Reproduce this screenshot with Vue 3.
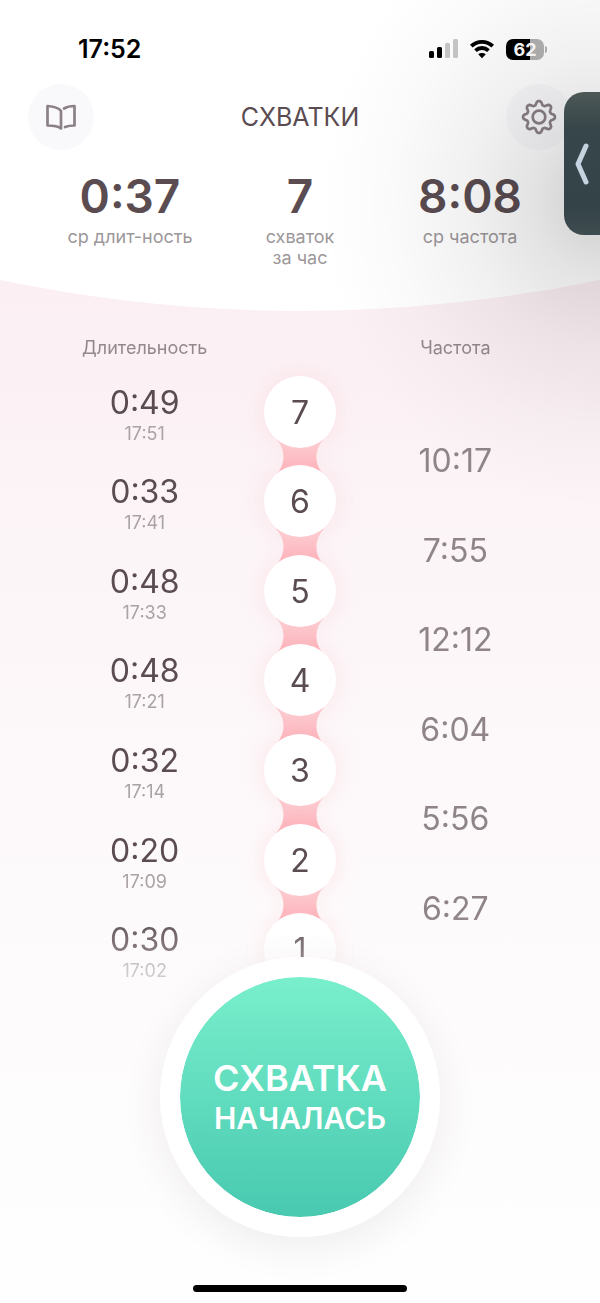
<script setup>
import { ref } from 'vue';

const stats = [
  { value: '0:37', label: 'ср длит-ность' },
  { value: '7', label: 'схваток за час' },
  { value: '8:08', label: 'ср частота' },
];

const contractions = ref([
  { id: 7, duration: '0:49', time: '17:51' },
  { id: 6, duration: '0:33', time: '17:41' },
  { id: 5, duration: '0:48', time: '17:33' },
  { id: 4, duration: '0:48', time: '17:21' },
  { id: 3, duration: '0:32', time: '17:14' },
  { id: 2, duration: '0:20', time: '17:09' },
  { id: 1, duration: '0:30', time: '17:02' },
]);

const intervals = ref(['10:17', '7:55', '12:12', '6:04', '5:56', '6:27']);

// eight rounded teeth around the centre of a 36x36 box
function gearPath() {
  const points = [];
  for (let i = 0; i < 160; i++) {
    const a = (i / 160) * Math.PI * 2;
    const s = Math.cos(8 * a);
    const r = 14 + 1.9 * s * (1.35 - 0.35 * s * s);
    points.push(`${(18 + r * Math.cos(a)).toFixed(2)} ${(18 + r * Math.sin(a)).toFixed(2)}`);
  }
  return `M${points.join('L')}Z`;
}

const gear = gearPath();
</script>

<template>
  <div class="page">
    <header class="header">
      <div class="status">
        <span class="clock">17:52</span>
        <div class="indicators">
          <svg class="signal" viewBox="0 0 29 20" aria-hidden="true">
            <rect x="0" y="12" width="5" height="7" rx="1.5" />
            <rect x="8" y="8" width="5" height="11" rx="1.5" />
            <rect class="off" x="16" y="4" width="5" height="15" rx="1.5" />
            <rect class="off" x="24" y="0" width="5" height="19" rx="1.5" />
          </svg>
          <svg class="wifi" viewBox="0 0 26 20" aria-hidden="true">
            <path d="M2.3 7.2C8.2 1.4 17.8 1.4 23.7 7.2" />
            <path d="M6.5 11.6C10.2 8.1 15.8 8.1 19.5 11.6" />
            <path class="dot" d="M13 19.2L9.2 15.3C11.3 13.4 14.7 13.4 16.8 15.3Z" />
          </svg>
          <div class="battery">
            <span class="level">62</span>
            <span class="tip"></span>
          </div>
        </div>
      </div>

      <nav class="nav">
        <button class="round" aria-label="Журнал">
          <svg class="book" viewBox="0 0 36 36" aria-hidden="true">
            <path d="M18 29.5V12C16 9 10.5 7.5 4.5 7V26.5C11 26.5 15.5 27.5 18 29.5" />
            <path d="M21 9.5C23.5 8 27 7 31.5 7V26.5C27.5 26.5 24.5 27 22 28" />
          </svg>
        </button>
        <h1>СХВАТКИ</h1>
        <button class="round" aria-label="Настройки">
          <svg class="gear" viewBox="0 0 36 36" aria-hidden="true">
            <path :d="gear" />
            <circle cx="18" cy="18" r="6.3" />
          </svg>
        </button>
      </nav>

      <dl class="stats">
        <div v-for="stat in stats" :key="stat.label" class="stat">
          <dd>{{ stat.value }}</dd>
          <dt>{{ stat.label }}</dt>
        </div>
      </dl>
    </header>
    <svg class="curve" viewBox="0 0 600 31" preserveAspectRatio="none" aria-hidden="true">
      <path d="M0 0Q300 62 600 0Z" />
    </svg>

    <main>
      <div class="log">
        <section class="column">
          <h2>Длительность</h2>
          <ol class="rows">
            <li v-for="item in contractions" :key="item.id" class="entry">
              <span class="duration">{{ item.duration }}</span>
              <span class="time">{{ item.time }}</span>
            </li>
          </ol>
        </section>

        <section class="column chain">
          <ol class="rows">
            <li v-for="(item, index) in contractions" :key="item.id" class="node">
              <svg v-if="index < contractions.length - 1" class="link" viewBox="0 0 48 36" aria-hidden="true">
                <defs>
                  <linearGradient :id="'link' + item.id" x1="0" y1="0" x2="0" y2="1">
                    <stop offset="0.2" stop-color="#fdcbd0" />
                    <stop offset="0.8" stop-color="#fdb5bd" />
                  </linearGradient>
                </defs>
                <path :fill="`url(#link${item.id})`" d="M0 0C10 10 10 26 0 36H48C38 26 38 10 48 0Z" />
              </svg>
              <span class="bubble">{{ item.id }}</span>
            </li>
          </ol>
        </section>

        <section class="column">
          <h2>Частота</h2>
          <ol class="rows between">
            <li v-for="interval in intervals" :key="interval" class="interval">{{ interval }}</li>
          </ol>
        </section>
      </div>

      <button class="start">
        <span class="big">СХВАТКА</span>
        <span class="small">НАЧАЛАСЬ</span>
      </button>
    </main>

    <div class="home"></div>

    <div class="shade"></div>
    <button class="drawer" aria-label="Открыть панель">
      <svg viewBox="0 0 16 44" aria-hidden="true">
        <path d="M12 4L4 22L12 40" />
      </svg>
    </button>
  </div>
</template>

<style>
body {
  margin: 0;
}
</style>

<style scoped>
.page {
  position: relative;
  display: flex;
  flex-direction: column;
  min-height: 100vh;
  overflow: hidden;
  box-sizing: border-box;
  padding-bottom: 11px;
  font-family: Inter, "Liberation Sans", sans-serif;
  color: #5a4c51;
  background: linear-gradient(#fbeff3 280px, #fcf5f8 560px, #fdfafb 900px, #fefefe 1250px);
}

button {
  padding: 0;
  border: none;
  font-family: inherit;
  cursor: pointer;
}

h1,
h2,
dl,
dd,
ol {
  margin: 0;
  padding: 0;
}

ol {
  list-style: none;
}

.header {
  padding: 34px 0 12px;
  background: white;
}

.status {
  display: flex;
  justify-content: space-between;
  align-items: center;
  height: 30px;
  padding: 0 53px 0 78px;
}

.clock {
  font-size: 25px;
  font-weight: 600;
  color: black;
}

.indicators {
  display: flex;
  align-items: center;
  gap: 11px;
}

.signal {
  width: 29px;
  height: 20px;

  .off {
    fill: #c8c8c8;
  }
}

.wifi {
  width: 26px;
  height: 20px;
  fill: none;
  stroke: black;
  stroke-width: 3.8;

  .dot {
    fill: black;
    stroke: none;
  }
}

.battery {
  display: flex;
  align-items: center;
  gap: 1px;
}

.level {
  width: 38px;
  height: 21px;
  border-radius: 7px;
  font-size: 18px;
  font-weight: 700;
  line-height: 21px;
  text-align: center;
  color: white;
  background: linear-gradient(90deg, black 62%, #b2b2b2 62%);
}

.tip {
  width: 2px;
  height: 7px;
  border-radius: 0 2px 2px 0;
  background: #b2b2b2;
}

.nav {
  display: flex;
  justify-content: space-between;
  align-items: center;
  padding: 20px 28px 0;

  h1 {
    font-size: 25px;
    font-weight: 400;
    line-height: 30px;
  }
}

.round {
  display: grid;
  place-items: center;
  width: 66px;
  height: 66px;
  border-radius: 50%;
  background: #f9f9fc;

  svg {
    width: 36px;
    height: 36px;
    fill: none;
    stroke: #8b8185;
    stroke-width: 2.7;
    stroke-linecap: round;
    stroke-linejoin: round;
  }
}

.stats {
  display: grid;
  grid-template-columns: repeat(3, 1fr);
  padding: 17px 45px 0;
}

.stat {
  display: flex;
  flex-direction: column;
  align-items: center;
  text-align: center;

  dd {
    font-size: 46px;
    font-weight: 600;
    line-height: 59px;
  }

  dt {
    max-width: 130px;
    font-size: 18px;
    line-height: 21px;
    color: #9c979a;
  }

  &:nth-child(2) dt {
    width: 80px;
  }
}

.curve {
  display: block;
  width: 100%;
  height: 31px;
  fill: white;
}

.log {
  display: grid;
  grid-template-columns: repeat(3, 1fr);
  padding: 26px 67px 0;
  mask-image: linear-gradient(black calc(100% - 80px), rgba(0, 0, 0, 0.4));
}

.column {
  display: flex;
  flex-direction: column;
  text-align: center;

  h2 {
    font-size: 18px;
    font-weight: 400;
    line-height: 22px;
    color: #93888d;
  }
}

.rows {
  display: grid;
  grid-auto-rows: 1fr;
  box-sizing: border-box;
  height: 627px;
  margin-top: 8px;
}

.chain {
  justify-content: flex-end;
}

.between {
  padding: 49px 0 41px;
}

.entry {
  display: flex;
  flex-direction: column;
  justify-content: center;
  padding-top: 8px;
}

.duration {
  font-size: 32px;
  line-height: 36px;
}

.time {
  font-size: 18px;
  line-height: 26px;
  color: #a9a2a6;
}

.node {
  position: relative;
  display: grid;
  place-items: center;
}

.link {
  position: absolute;
  top: 72px;
  width: 48px;
  height: 36px;
}

.bubble {
  position: relative;
  z-index: 1;
  width: 72px;
  height: 72px;
  border-radius: 50%;
  font-size: 32px;
  line-height: 73px;
  background: white;
  box-shadow: 0 0 24px rgba(252, 190, 196, 0.32);
}

.interval {
  display: grid;
  place-items: center;
  font-size: 32px;
  color: #8f8589;
}

.start {
  position: relative;
  display: flex;
  flex-direction: column;
  justify-content: center;
  align-items: center;
  width: 280px;
  height: 280px;
  margin: -37px auto 0;
  border: 20px solid white;
  border-radius: 50%;
  font-weight: 600;
  color: white;
  background: linear-gradient(#79efcc, #48c9b0) padding-box;
  box-shadow: 0 10px 40px rgba(60, 40, 50, 0.08);
}

.big {
  font-size: 36px;
  line-height: 42px;
}

.small {
  font-size: 30px;
  line-height: 38px;
}

.home {
  width: 214px;
  height: 7px;
  margin: auto auto 0;
  border-radius: 4px;
  background: black;
}

.shade {
  position: absolute;
  top: 0;
  right: 0;
  width: 300px;
  height: 520px;
  pointer-events: none;
  background: radial-gradient(280px 310px at 100% 200px, rgba(0, 0, 0, 0.2), rgba(0, 0, 0, 0.11) 24%, rgba(0, 0, 0, 0.055) 48%, rgba(0, 0, 0, 0.02) 74%, transparent);
}

.drawer {
  position: absolute;
  top: 92px;
  right: 0;
  display: grid;
  place-items: center;
  width: 36px;
  height: 143px;
  border-radius: 20px 0 0 20px;
  background: linear-gradient(#4d5856, #37464a 25%, #344348 80%, #3f4c50);

  svg {
    width: 16px;
    height: 44px;
    fill: none;
    stroke: #c5d3e0;
    stroke-width: 5;
    stroke-linecap: round;
    stroke-linejoin: round;
  }
}
</style>
